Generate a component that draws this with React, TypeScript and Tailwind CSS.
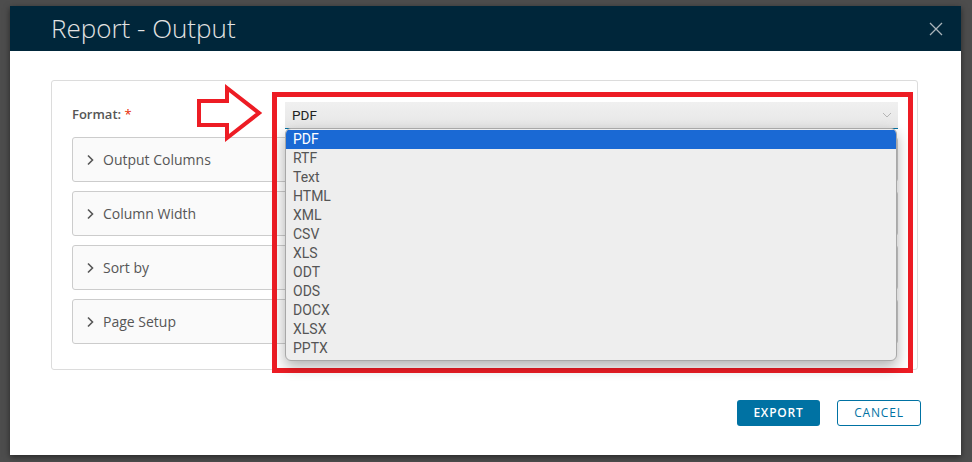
import React from "react";

const formats = ["PDF", "RTF", "Text", "HTML", "XML", "CSV", "XLS", "ODT", "ODS", "DOCX", "XLSX", "PPTX"];
const sections = ["Output Columns", "Column Width", "Sort by", "Page Setup"];

const Chevron = () => (
  <svg width="9" height="12" viewBox="0 0 9 12" className="shrink-0">
    <path d="M2 1.5 L6.5 6 L2 10.5" fill="none" stroke="#565656" strokeWidth="1.6" />
  </svg>
);

const FormatSelect = () => {
  return (
    <div className="relative flex-1">
      <div className="h-[27px] flex items-center justify-between pl-[7px] pr-[6px] bg-gradient-to-b from-[#f0f0f0] to-[#e6e6e6] border-b border-[#0072a3]">
        <span className="text-[13.5px] text-[#222] font-['Roboto',sans-serif]">PDF</span>
        <svg width="10" height="6" viewBox="0 0 10 6">
          <path d="M1 1 L5 5 L9 1" fill="none" stroke="#b5b5b5" strokeWidth="1" />
        </svg>
      </div>
      {/* open native list */}
      <div className="absolute left-0 top-[26px] w-[612px] pt-[1px] pb-[2px] bg-[#eeeeee] border border-[#a8a8a8] rounded-[6px] shadow-[0_6px_14px_rgba(0,0,0,0.3)] font-['Roboto',sans-serif] overflow-hidden z-10">
        {formats.map((f, i) => (
          <div
            key={f}
            className={
              i === 0
                ? "h-[19px] leading-[19px] px-[7px] text-[14px] bg-[#1a69d4] text-white"
                : "h-[19px] leading-[19px] px-[7px] text-[14px] text-[#555]"
            }
          >
            {f}
          </div>
        ))}
      </div>
    </div>
  );
};

export default function App() {
  return (
    <div className="relative w-[972px] h-[462px] bg-[#4d4d4d] pt-[6px] pl-[10px] font-['Open_Sans',sans-serif] overflow-hidden">
      <div className="w-[951px] h-[449px] bg-white shadow-[0_2px_6px_rgba(0,0,0,0.5)] flex flex-col">
        <div className="h-[45px] bg-[#00263a] flex items-center justify-between pl-[41px] pr-[18px]">
          <h1 className="text-[26px] font-light text-[#e3e3e3]">Report - Output</h1>
          <svg width="14" height="14" viewBox="0 0 14 14">
            <path d="M1 1 L13 13 M13 1 L1 13" stroke="#a9b4ba" strokeWidth="1.3" />
          </svg>
        </div>

        <div className="flex-1 px-[41px] pt-[29px] flex flex-col">
          <div className="w-[867px] h-[290px] border border-[#dcdcdc] rounded-[3px] pt-[21px] pl-[20px] pr-[19px]">
            <div className="flex items-center">
              <div className="w-[213px] text-[13px] font-semibold text-[#565656] -mt-[2px]">
                Format: <span className="text-[#e62700] font-normal">*</span>
              </div>
              <FormatSelect />
            </div>
            <div className="mt-[8px] flex flex-col gap-[9px]">
              {sections.map((s) => (
                <div
                  key={s}
                  className="h-[45px] bg-[#fafafa] border border-[#cccccc] rounded-[3px] flex items-center gap-[8px] pl-[13px]"
                >
                  <Chevron />
                  <span className="text-[14px] text-[#565656]">{s}</span>
                </div>
              ))}
            </div>
          </div>

          <div className="mt-[30px] flex justify-end gap-[17px] w-[870px]">
            <button className="w-[83px] h-[26px] rounded-[3px] bg-[#0072a3] text-white text-[12px] font-semibold tracking-[0.8px]">
              EXPORT
            </button>
            <button className="w-[84px] h-[26px] rounded-[3px] border border-[#0072a3] text-[#0072a3] text-[12px] tracking-[0.8px]">
              CANCEL
            </button>
          </div>
        </div>
      </div>

      {/* annotation: red arrow and frame */}
      <svg className="absolute left-[192px] top-[82px]" width="76" height="64" viewBox="192 82 76 64">
        <polygon
          points="199,101 227,101 227,88 259,113 227,138 227,125 199,125"
          fill="none"
          stroke="#ed1c24"
          strokeWidth="4"
          strokeLinejoin="miter"
        />
      </svg>
      <div className="absolute left-[272px] top-[92px] w-[641px] h-[281px] border-[5px] border-[#ed1c24]" />
    </div>
  );
}
